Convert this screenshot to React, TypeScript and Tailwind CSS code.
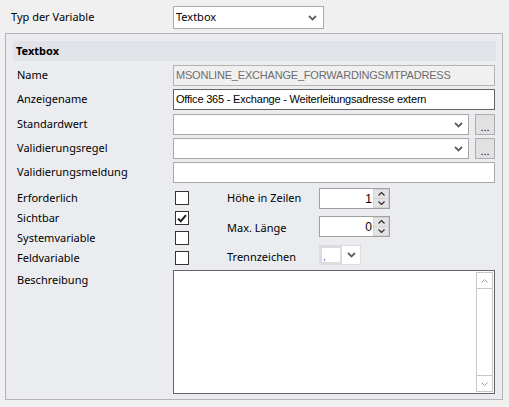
import React from "react";

const ui = { fontFamily: '"Noto Sans", "Open Sans", sans-serif' };
const sans = { fontFamily: '"Liberation Sans", Arial, sans-serif' };

function Chevron({ className = "" }: { className?: string }) {
  return (
    <svg width="9" height="6" viewBox="0 0 9 6" className={className}>
      <polyline points="1,1 4.5,4.5 8,1" fill="none" stroke="#606060" strokeWidth="1.8" />
    </svg>
  );
}

function Label({ children, className = "" }: { children: React.ReactNode; className?: string }) {
  return (
    <div className={`w-[160px] shrink-0 pl-[4px] text-[11px] text-black ${className}`} style={ui}>
      {children}
    </div>
  );
}

function ComboBox() {
  return (
    <div className="flex h-[21px] w-[298px] items-center justify-end border border-[#a9a9a9] bg-white pr-[5px]">
      <Chevron />
    </div>
  );
}

function DotsButton() {
  return (
    <div
      className="ml-[6px] flex h-[21px] w-[20px] items-end justify-center border border-[#adadad] bg-[#e1e1e1] pb-[3px] text-[11px] leading-[8px] text-black"
      style={sans}
    >
      ...
    </div>
  );
}

function CheckBox({ checked = false }: { checked?: boolean }) {
  return (
    <div className="ml-[2px] flex h-[14px] w-[14px] items-center justify-center border border-[#333333] bg-white">
      {checked && (
        <svg width="10" height="9" viewBox="0 0 10 9">
          <polyline points="1,4.5 3.8,7.2 9,1.2" fill="none" stroke="#202020" strokeWidth="2" />
        </svg>
      )}
    </div>
  );
}

function SpinBox({ value }: { value: string }) {
  return (
    <div className="flex h-[21px] w-[71px] border border-[#a0a0a0] bg-white">
      <div className="flex flex-1 items-center justify-end pr-[1px] text-[12px] text-black" style={sans}>
        {value}
      </div>
      <div className="flex w-[16px] flex-col gap-[1px] bg-[#d4d4d4] p-[1px]">
        <div className="flex flex-1 items-center justify-center bg-[#e3e3e3]">
          <svg width="7" height="4" viewBox="0 0 7 4">
            <polyline points="0.5,3.5 3.5,0.5 6.5,3.5" fill="none" stroke="#303030" strokeWidth="1.2" />
          </svg>
        </div>
        <div className="flex flex-1 items-center justify-center bg-[#e3e3e3]">
          <svg width="7" height="4" viewBox="0 0 7 4">
            <polyline points="0.5,0.5 3.5,3.5 6.5,0.5" fill="none" stroke="#303030" strokeWidth="1.2" />
          </svg>
        </div>
      </div>
    </div>
  );
}

export default function App() {
  return (
    <div className="h-[407px] w-[509px] overflow-hidden bg-[#f0f0f0]">
      {/* TYPE SELECT */}
      <div className="flex items-center pt-[6px]">
        <div className="w-[173px] pl-[11px] text-[11px] text-black" style={ui}>
          Typ der Variable
        </div>
        <div className="flex h-[23px] w-[151px] items-center justify-between border border-[#a9a9a9] bg-white pl-[2px] pr-[6px]">
          <span className="text-[11px] text-black" style={ui}>Textbox</span>
          <Chevron />
        </div>
      </div>

      {/* PANEL */}
      <div className="ml-[5px] mt-[4px] h-[367px] w-[498px] border border-[#b4b4b4] bg-[#ebecf0] px-[7px] pt-[7px]">
        <div className="flex h-[20px] w-[483px] items-center bg-[#e2e3e8] pl-[3px] text-[11px] font-bold text-black" style={ui}>
          Textbox
        </div>

        <div className="mt-[4px] flex h-[21px] items-center">
          <Label>Name</Label>
          <div
            className="flex h-[21px] w-[323px] items-center border border-[#b4b4b4] bg-[#f0f0f0] pl-[2px] text-[11px] tracking-[-0.2px] text-[#6d6d6d]"
            style={sans}
          >
            MSONLINE_EXCHANGE_FORWARDINGSMTPADRESS
          </div>
        </div>

        <div className="mt-[3px] flex h-[21px] items-center">
          <Label>Anzeigename</Label>
          <div
            className="flex h-[21px] w-[323px] items-center border border-[#646464] bg-white pl-[2px] text-[11px] tracking-[-0.2px] text-black"
            style={sans}
          >
            Office 365 - Exchange - Weiterleitungsadresse extern
          </div>
        </div>

        <div className="mt-[4px] flex h-[21px] items-center">
          <Label>Standardwert</Label>
          <ComboBox />
          <DotsButton />
        </div>

        <div className="mt-[3px] flex h-[21px] items-center">
          <Label>Validierungsregel</Label>
          <ComboBox />
          <DotsButton />
        </div>

        <div className="mt-[3px] flex h-[21px] items-center">
          <Label>Validierungsmeldung</Label>
          <div className="h-[21px] w-[323px] border border-[#a9a9a9] bg-white" />
        </div>

        {/* FLAGS + NUMBERS */}
        <div className="mt-[5px] flex">
          <div className="flex flex-col">
            {[
              ["Erforderlich", false],
              ["Sichtbar", true],
              ["Systemvariable", false],
              ["Feldvariable", false],
            ].map(([name, checked]) => (
              <div key={name as string} className="flex h-[20px] items-center">
                <Label>{name as string}</Label>
                <CheckBox checked={checked as boolean} />
              </div>
            ))}
          </div>

          <div className="ml-[38px] flex flex-col text-[11px] text-black" style={ui}>
            <div className="flex h-[21px] items-center">
              <div className="w-[92px]">Höhe in Zeilen</div>
              <SpinBox value="1" />
            </div>
            <div className="mt-[7px] flex h-[21px] items-center">
              <div className="w-[92px] pt-[3px]">Max. Länge</div>
              <SpinBox value="0" />
            </div>
            <div className="mt-[8px] flex h-[20px] items-center">
              <div className="w-[92px] pt-[5px]">Trennzeichen</div>
              <div className="flex h-[20px] w-[42px] border border-[#dcdcdc] bg-white">
                <div className="flex w-[22px] items-end border-2 border-[#dcdcdc] pl-[1px] text-[10px] leading-[10px] text-[#4a6fb5]" style={sans}>
                  ,
                </div>
                <div className="flex flex-1 items-center justify-center">
                  <Chevron />
                </div>
              </div>
            </div>
          </div>
        </div>

        {/* DESCRIPTION */}
        <div className="mt-[2px] flex">
          <Label className="pt-[2px]">Beschreibung</Label>
          <div className="flex h-[124px] w-[323px] justify-end border border-[#646464] bg-white p-[1px]">
            <div className="flex w-[17px] flex-col justify-between border border-[#c8c8c8]">
              <div className="flex h-[16px] items-center justify-center border-b border-[#c8c8c8]">
                <svg width="7" height="4" viewBox="0 0 7 4">
                  <polyline points="0.5,3.5 3.5,0.5 6.5,3.5" fill="none" stroke="#a0a0a0" strokeWidth="1" />
                </svg>
              </div>
              <div className="flex h-[16px] items-center justify-center border-t border-[#c8c8c8]">
                <svg width="7" height="4" viewBox="0 0 7 4">
                  <polyline points="0.5,0.5 3.5,3.5 6.5,0.5" fill="none" stroke="#a0a0a0" strokeWidth="1" />
                </svg>
              </div>
            </div>
          </div>
        </div>
      </div>
    </div>
  );
}
